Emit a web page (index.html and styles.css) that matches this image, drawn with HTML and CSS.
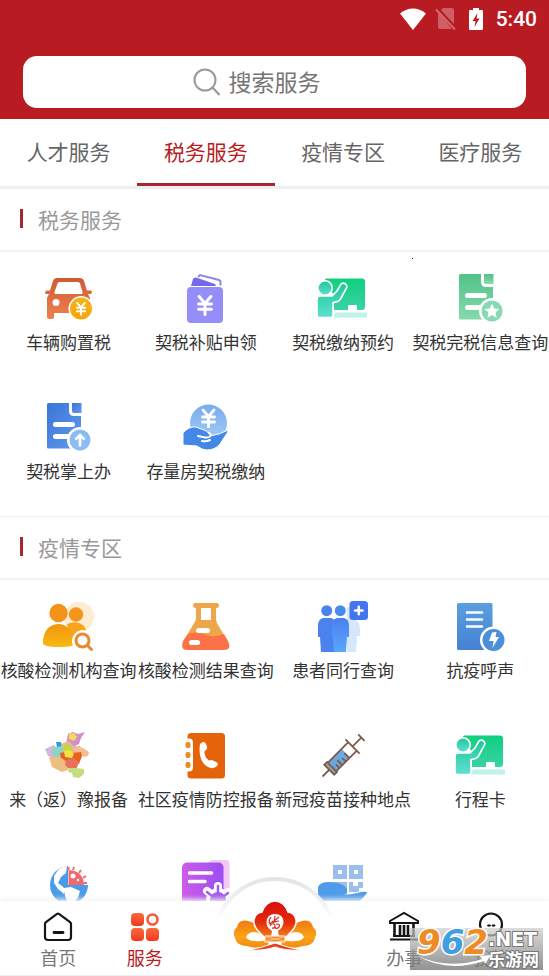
FILE: index.html
```html
<!DOCTYPE html>
<html lang="zh-CN">
<head>
<meta charset="utf-8">
<meta name="viewport" content="width=device-width, initial-scale=1">
<title>服务</title>
<link rel="stylesheet" href="styles.css">
</head>
<body>
<svg class="defs" aria-hidden="true">
  <defs>
    <linearGradient id="g-car" x1="0" y1="0" x2="0" y2="1"><stop offset="0" stop-color="#cf5a33"/><stop offset="1" stop-color="#ee8150"/></linearGradient>
    <linearGradient id="g-coin" x1="0" y1="0" x2="0" y2="1"><stop offset="0" stop-color="#f4b51c"/><stop offset="1" stop-color="#f6a50a"/></linearGradient>
    <linearGradient id="g-board" x1="0" y1="0" x2="0" y2="1"><stop offset="0" stop-color="#0fd07e"/><stop offset="1" stop-color="#3ad2a6"/></linearGradient>
    <linearGradient id="g-man" x1="0" y1="0" x2="0" y2="1"><stop offset="0" stop-color="#1fc796"/><stop offset="1" stop-color="#5ee0d2"/></linearGradient>
    <linearGradient id="g-gdoc" x1="0" y1="0" x2="0" y2="1"><stop offset="0" stop-color="#51c287"/><stop offset="1" stop-color="#86d9ae"/></linearGradient>
    <linearGradient id="g-bdoc" x1="0" y1="0" x2="1" y2="1"><stop offset="0" stop-color="#3c75d8"/><stop offset="1" stop-color="#5f9bec"/></linearGradient>
    <linearGradient id="g-ball" x1="0" y1="0" x2="0" y2="1"><stop offset="0" stop-color="#76acef"/><stop offset="1" stop-color="#a6cbf7"/></linearGradient>
    <linearGradient id="g-people" x1="0" y1="0" x2="0" y2="1"><stop offset="0" stop-color="#f3940f"/><stop offset="1" stop-color="#f8b912"/></linearGradient>
    <linearGradient id="g-trio" x1="0" y1="0" x2="0" y2="1"><stop offset="0" stop-color="#4a80ee"/><stop offset="1" stop-color="#5aa6fb"/></linearGradient>
    <linearGradient id="g-note" x1="0" y1="0" x2="0" y2="1"><stop offset="0" stop-color="#599fe0"/><stop offset="1" stop-color="#4781d2"/></linearGradient>
    <linearGradient id="g-purple" x1="0" y1="0" x2="1" y2="0"><stop offset="0" stop-color="#cb5ce8"/><stop offset="1" stop-color="#9c4df2"/></linearGradient>
    <linearGradient id="g-svc" x1="0" y1="0" x2="0" y2="1"><stop offset="0" stop-color="#fa6a3c"/><stop offset="1" stop-color="#f03a20"/></linearGradient>
    <linearGradient id="g-petal" x1="0" y1="0" x2="0" y2="1"><stop offset="0" stop-color="#d90d0d"/><stop offset=".55" stop-color="#e32a0c"/><stop offset="1" stop-color="#f58a1c"/></linearGradient>
    <linearGradient id="g-leaf" x1="0" y1="0" x2="0" y2="1"><stop offset="0" stop-color="#f07a10"/><stop offset=".6" stop-color="#fba315"/><stop offset="1" stop-color="#f28b12"/></linearGradient>
    <linearGradient id="g-arc" x1="0" y1="0" x2="0" y2="1"><stop offset="0" stop-color="#e1e5e5"/><stop offset=".35" stop-color="#fff"/></linearGradient>
    <symbol id="yen" viewBox="0 0 16 20"><path d="M2.5 2 8 8.500 13.500 2M2 9h12M2 14h12M8 9v10" fill="none" stroke="#fff" stroke-width="2.800" stroke-linecap="round"/></symbol>
    <symbol id="teacher" viewBox="0 0 52 52">
      <path d="M9 5.500h36a3 3 0 0 1 3 3V34a3 3 0 0 1-3 3H17V22L7 8z" fill="url(#g-board)"/>
      <path d="M31 37v-4q0-1 1-1h7q1 0 1 1v4z" fill="#fff"/>
      <path d="M18 39.500h32v5H16z" fill="#bdf3ea"/>
      <path d="M3 23h12l5-5 4-7a3.500 3.500 0 0 1 5.500 4l-6 11q-2 3-7.500 3.500V42q0 2.500-2 2.500H3q-3 0-3-3V27q0-4 3-4z" fill="url(#g-man)" stroke="#fff" stroke-width="1.600"/>
      <circle cx="8" cy="15" r="7.200" fill="url(#g-man)" stroke="#fff" stroke-width="1.600"/>
    </symbol>
    <symbol id="doc" viewBox="0 0 52 52">
      <path d="M5.500 1H26v8q0 5 5 5h7v31q0 1.500-1.500 1.500h-31Q4 46.500 4 45V2.500Q4 1 5.500 1z"/>
      <path d="M29 1h9.500v10H31q-2 0-2-2z"/>
      <path d="M12.500 22.500h17M12.500 34.500h14" stroke="#fff" stroke-width="5" stroke-linecap="round"/>
      <circle cx="37" cy="38" r="13" fill="#fff"/>
    </symbol>
  </defs>
</svg>

<div class="app">
  <header class="header">
    <div class="status">
      <svg class="wifi" viewBox="0 0 28 24" aria-hidden="true"><path d="M1 6.500Q14-3.500 27 6.500L14 23z" fill="#fff"/></svg>
      <svg class="sim" viewBox="0 0 22 24" aria-hidden="true"><path d="M6 3 19 17V3q0-2-2-2H8zM3 5v15q0 2 2 2h12z" fill="#cf5f64"/><path d="m1 2.500 19 20" stroke="#d3696d" stroke-width="2"/></svg>
      <svg class="battery" viewBox="0 0 16 24" aria-hidden="true"><path d="M5 1h6v2h3q1 0 1 1v18q0 1-1 1H2q-1 0-1-1V4q0-1 1-1h3z" fill="#fff"/><path d="M9.500 6 4.500 14h3L6.500 20l5-8.500h-3z" fill="#b81c22"/></svg>
      <time class="clock">5:40</time>
    </div>
    <form class="search" role="search">
      <label class="search-icon" for="q" aria-label="搜索服务">
        <svg viewBox="0 0 28 28" aria-hidden="true"><circle cx="12" cy="12" r="10.500" fill="none" stroke="#999" stroke-width="2"/><path d="m19.500 19.500 7 7.500" stroke="#999" stroke-width="2.200"/></svg>
      </label>
      <input class="search-input" id="q" type="search" placeholder="搜索服务">
    </form>
  </header>

  <nav class="tabs" aria-label="服务分类">
    <a class="tab" href="#talent">人才服务</a>
    <a class="tab tab-active" href="#tax" aria-current="true">税务服务</a>
    <a class="tab" href="#epidemic">疫情专区</a>
    <a class="tab" href="#medical">医疗服务</a>
  </nav>

  <main class="content">
    <span class="speck"></span>
    <section class="section" id="tax">
      <h2 class="section-title">税务服务</h2>
      <div class="grid">
        <a class="service" href="#"><svg class="icon" viewBox="0 0 50 50" aria-hidden="true">
          <path fill-rule="evenodd" d="M13 5h23q3 0 4 3l3 9.500h3.500q1.500 0 1.500 1.500t-1.500 2H44l2 4v13q0 2-2 2H10v4q0 2-2 2H5q-2 0-2-2V25l2-4H3q-2 0-2-1.500t2-2h3L9 8q1-3 4-3zm2.500 4q-1.500 0-2 1.500L10.500 19q-.5 2 1 2h26q1.500 0 1-2L36 10.500Q35.500 9 34 9z" fill="url(#g-car)"/>
          <circle cx="12" cy="29.500" r="3.500" fill="#fff"/><circle cx="37" cy="35.500" r="12.500" fill="#fff"/><circle cx="37" cy="35.500" r="11" fill="url(#g-coin)"/><use href="#yen" x="31.500" y="28" width="11" height="15"/></svg>车辆购置税</a>
        <a class="service" href="#"><svg class="icon" viewBox="0 0 50 50" aria-hidden="true">
          <path d="M10 13 12 6q1-2 3-1.500L34 11l1 2z" fill="#7469e8"/><path d="m17 4 2-2 19 5q1.500.5 1.500 2v3.500" fill="none" stroke="#8d83f2" stroke-width="2"/>
          <rect x="6" y="14" width="36" height="36" rx="4" fill="#958df8"/><use href="#yen" x="15.500" y="21" width="17" height="22"/></svg>契税补贴申领</a>
        <a class="service" href="#"><svg class="icon" viewBox="0 0 50 50" aria-hidden="true"><use href="#teacher" x="-1" width="52" height="52"/></svg>契税缴纳预约</a>
        <a class="service" href="#"><svg class="icon" viewBox="0 0 50 50" aria-hidden="true"><use href="#doc" width="52" height="52" fill="url(#g-gdoc)"/><circle cx="37" cy="38" r="10.500" fill="#86d9b2"/><path d="m37 30.500 2.200 5 5.300.5-4 3.500 1.200 5.500-4.700-3-4.700 3 1.200-5.500-4-3.500 5.300-.5z" fill="#fff"/></svg>契税完税信息查询</a>
        <a class="service" href="#"><svg class="icon" viewBox="0 0 50 50" aria-hidden="true"><use href="#doc" x="-1" width="52" height="52" fill="url(#g-bdoc)"/><circle cx="36" cy="38" r="10.500" fill="#8bbcf3"/><path d="M36 44.500V34m-4.500 3.500L36 33l4.500 4.500" fill="none" stroke="#fff" stroke-width="2.600"/></svg>契税掌上办</a>
        <a class="service" href="#"><svg class="icon" viewBox="0 0 50 50" aria-hidden="true"><circle cx="27.500" cy="21" r="18.500" fill="url(#g-ball)"/><use href="#yen" x="19" y="6" width="17" height="20"/>
          <path d="M2 31q6-7 13-6l8 3q3 1 5 3.500l3 2q8-1 15-5 2 0 .5 2L39 42q-5 6-13 6-5 0-10-4L2 43z" fill="#4388e6" stroke="#fff"/><path d="m17 34 7 1.500q4 .5 5.500-1.500.5-2-2-3.500M29 38q-4 2-8 1" fill="none" stroke="#fff" stroke-width="2" stroke-linecap="round"/></svg>存量房契税缴纳</a>
      </div>
    </section>

    <section class="section" id="epidemic">
      <h2 class="section-title">疫情专区</h2>
      <div class="grid">
        <a class="service" href="#"><svg class="icon" viewBox="0 0 50 50" aria-hidden="true"><circle cx="35" cy="16" r="15" fill="#fdebd2"/><circle cx="32" cy="13.500" r="7.200" fill="#f5961b"/><path d="M23 23q9-4 16 1 4 4 4 12H26z" fill="#f7a51b"/><circle cx="14.500" cy="12" r="9.200" fill="#f4921a"/>
          <path d="M-1 39Q1 24 14 23q14 0 17 19 0 4-16 4T-1 42z" fill="url(#g-people)"/><circle cx="39" cy="40" r="11" fill="#fff"/><circle cx="38.500" cy="39.500" r="6.500" fill="none" stroke="#e98a30" stroke-width="3"/><path d="m43.500 44.500 4 4" stroke="#e98a30" stroke-width="3" stroke-linecap="round"/></svg>核酸检测机构查询</a>
        <a class="service" href="#"><svg class="icon" viewBox="0 0 50 50" aria-hidden="true"><path d="M14 2h22q2 0 2 2.500T35 7v11q0 2 2 6l9 15H3l9-15q3-4 3-7V7q-3 0-3-2.500T14 2z" fill="#eda649"/><path d="M7 33q8-3 17 .5T43 33l4 7q4 9-4 9H6q-7 0-4-9z" fill="#fa7348"/><path d="M20 7h10v12H20z" fill="#fff"/><path d="M17.500 29.500h9M10.500 41.500h6" stroke="#fff" stroke-width="5" stroke-linecap="round"/></svg>核酸检测结果查询</a>
        <a class="service" href="#"><svg class="icon" viewBox="0 0 50 50" aria-hidden="true"><path d="M29 6h6v12q7 2 7 10v7h-3l-1 16h-9z" fill="#d4e7fd"/><path d="M5 17h8q5 1 5 9v25H3L2 36H0V25q0-7 5-8z" fill="#4b82ed"/><path d="M19 17h7q5 1 5 8v11h-2l-1 15H16l-1-15h-1V25q0-7 5-8z" fill="url(#g-trio)"/><circle cx="8.700" cy="9.700" r="5.500" fill="#4b82ed"/><circle cx="22.300" cy="9.700" r="5.500" fill="#4b8af0"/><rect x="31.500" width="18.500" height="19" rx="3.500" fill="#4376ee"/><path d="M37 9.500h7.500M40.800 5.700v7.500" stroke="#fff" stroke-width="2.500" stroke-linecap="round"/></svg>患者同行查询</a>
        <a class="service" href="#"><svg class="icon" viewBox="0 0 50 50" aria-hidden="true"><rect x="2" y="2" width="35.500" height="47" rx="1.500" fill="url(#g-note)"/><path d="M12 11.500h15M12 18.500h15M12 25.500h15" stroke="#fff" stroke-width="2.500" stroke-linecap="round"/><circle cx="38.500" cy="39" r="13.500" fill="#fff"/><circle cx="38.500" cy="39" r="11" fill="#4b8ed9"/><path d="m37 31.500 4.500-.5-1 5h3.500l-6.500 11 1-7H34z" fill="#fff"/></svg>抗疫呼声</a>
        <a class="service" href="#"><svg class="icon" viewBox="0 0 50 50" aria-hidden="true">
          <path d="m24 4 5-2 5 2 7-2-4 6-2 6-6 3-7-3z" fill="#d58fc4"/><path d="m25 4 5-1 3 4-3 4-5-2z" fill="#f1dc5c"/><path d="m1 19 9-4 4 5-2 9-8-3z" fill="#d5b4e0"/><path d="m8 18 9-3 4 8-3 7-9-2z" fill="#8bd4c6"/><path d="m12 12 5 0 1 4-5 1z" fill="#2a9fd8"/><path d="m17 14 7-3 6 5 6 0 3 6-9 4-10-4z" fill="#e9b3a8"/><path d="m18 16 7-2 4 5-3 5-6-2z" fill="#c2d937"/><path d="m32 16 7 2 6 4-1 4-4 1-5-4-5 1z" fill="#f3bf8f"/><path d="m16 23 6-1 3 5 6 1v5l-7 1-7-5z" fill="#e8601c"/><path d="m28 23 9-1 1 4-3 8-7-3z" fill="#e8601c"/><path d="m20 21 6-1 4 4-2 4-7-1z" fill="#f2e24a"/><path d="m5 27 11 0 7 5 1 8-6 2-10-5z" fill="#efbd80"/><path d="m22 30 8-2 5 4-3 8-7-1-4-4z" fill="#e9705a"/><path d="m25 38 7 0 8 1 0 5-5 4-6-1-1-4-4-1z" fill="#c4dd80"/></svg>来（返）豫报备</a>
        <a class="service" href="#"><svg class="icon" viewBox="0 0 50 50" aria-hidden="true"><rect x="6.500" y="3" width="37.500" height="45.500" rx="3.500" fill="#e5640b"/><rect x="2" y="8.500" width="10" height="33" rx="4" fill="#fff"/><g fill="#e98a22"><rect x="4.500" y="12" width="5" height="6" rx="2"/><rect x="4.500" y="22" width="5" height="6" rx="2"/><rect x="4.500" y="32" width="5" height="6" rx="2"/></g><path d="M19 14q4-4 6 0 3 5-1.500 7-.5 6 4.500 9.500 2-1 4 0l4 2q2 2-1 4.500-6 3-11-2-7-7-5-21z" fill="#fff"/></svg>社区疫情防控报备</a>
        <a class="service" href="#"><svg class="icon" viewBox="0 0 50 50" aria-hidden="true"><g transform="rotate(45 25 26)" fill="none" stroke="#7d5a4c" stroke-width="1.800"><path d="M19.500 22h11v19h-11z" fill="#6aa9dc" stroke="none"/><path d="M19 12.500V42M31 12.500V42M15 12.500h20M25 12.500V0M20.500 0h9M25 46v9"/><path d="M18 41.500h14v4H18z" fill="#91a0a0"/><path d="M24 23h7M26 28h5M24 33h7M26 37h5"/></g></svg>新冠疫苗接种地点</a>
        <a class="service" href="#"><svg class="icon" viewBox="0 0 50 50" aria-hidden="true"><use href="#teacher" width="52" height="52"/></svg>行程卡</a>
        <a class="service" href="#" aria-label="全球疫情"><svg class="icon" viewBox="0 0 50 50" aria-hidden="true"><circle cx="25" cy="26" r="19" fill="#4a9be8"/><path d="M14 11q5-4 9-4l-1 7-5 4-3 6 4 3 3 3-1 5-6-5-4-6 0-7zM20 29l7-1 9 4-2 7-6 6-5-3-2-5z" fill="#fff"/><path d="M24 6h22v20H24z" fill="#fff"/><path d="M24.500 11q15 1 15.500 15H24.500z" fill="#ef696f"/><path d="m29 11 1-3M35 14l2-3M39 19l3-2M24.500 11V8M40 24h3" stroke="#ef696f" stroke-width="2"/><circle cx="29" cy="17" r="2.500" fill="#fff"/><circle cx="34" cy="21" r="1.200" fill="#fff"/></svg></a>
        <a class="service" href="#" aria-label="疫情通报"><svg class="icon" viewBox="0 0 50 50" aria-hidden="true"><rect x="28" y="1" width="20.500" height="32" rx="4" fill="#f3c8f4"/><rect x="1" y="3.500" width="41.500" height="47" rx="5" fill="url(#g-purple)"/><path d="M8.500 14h22M8.500 22.500h15.500" stroke="#fff" stroke-width="3.500" stroke-linecap="round"/><g fill="none" stroke="#fff" stroke-width="8" stroke-linecap="round"><path d="M37 32v-5M30 35l-4-3M44 35l3-2"/></g><circle cx="37" cy="41" r="12" fill="#fff"/><circle cx="37" cy="41" r="8" fill="#a75bea"/><path d="M37 34v-7M31 37l-5-4M43 37l4-3" stroke="#a75bea" stroke-width="2.500" stroke-linecap="round"/></svg></a>
        <a class="service" href="#" aria-label="健康码"><svg class="icon" viewBox="0 0 50 50" aria-hidden="true"><path fill-rule="evenodd" d="M15 6h14v14H15zm5 5v4h4v-4zM31 6h14v14H31zm5 5v4h4v-4zM15 23h14v14H15zM31 23h4v4h5v-4h5v6h-4v4H31z" fill="#9abfec"/><path d="M0 28q2-5 11-5 8 0 14 3 5 3 4 7-1 2-4 3 12-1 18-3 7-1 6 1-6 8-12 11H7Q0 42 0 38z" fill="#509ceb"/></svg></a>
      </div>
    </section>
  </main>

  <nav class="bottom" aria-label="主导航">
    <a class="nav-item" href="#"><svg class="nav-icon" viewBox="0 0 32 32" aria-hidden="true"><path d="M15 4q1-.8 2 0l11 8q1 1 1 2v13q0 3-3 3H6q-3 0-3-3V14q0-1 1-2z" fill="none" stroke="#161616" stroke-width="2.200"/><path d="M12 22.500h9" stroke="#161616" stroke-width="2.800" stroke-linecap="round"/></svg>首页</a>
    <a class="nav-item nav-active" href="#" aria-current="page"><svg class="nav-icon" viewBox="0 0 32 32" aria-hidden="true"><g fill="url(#g-svc)"><rect x="2" y="3" width="13" height="13" rx="4"/><rect x="2" y="18" width="13" height="13" rx="4"/><rect x="17" y="18" width="13" height="13" rx="4"/></g><circle cx="23.500" cy="9.500" r="5" fill="none" stroke="#f2583a" stroke-width="2.600"/></svg>服务</a>
    <a class="nav-home" href="#" aria-label="豫事办">
      <svg class="dome" viewBox="0 0 124 124" aria-hidden="true"><circle cx="62" cy="62" r="60" fill="#fff" stroke="url(#g-arc)" stroke-width="4"/></svg>
      <svg class="lotus" viewBox="0 0 84 50" aria-hidden="true">
        <path d="M2 37q-3-7 2-11 2-8 11-6 9 2 15 11l5 9q2 5-4 6-9 2-17-1-10 0-12-8zM82 37q3-7-2-11-2-8-11-6-9 2-15 11l-5 9q-2 5 4 6 9 2 17-1 10 0 12-8z" fill="url(#g-leaf)"/>
        <path d="M13 36q2-5 9-5 7 1 11 8-5 2-11 1-7 0-9-4zM71 36q-2-5-9-5-7 1-11 8 5 2 11 1 7 0 9-4z" fill="#fff"/>
        <path d="M28 33q-8-7-7-14 1-7 8-8Q33 0 42 0t13 11q7 1 8 8 1 7-7 14l-5 5H33z" fill="url(#g-petal)" stroke="#fff" stroke-width="1.500"/>
        <path d="M42 13q8 0 8.500 8 0 5-5.500 9l1 6h-8l1-6q-6-4-5.500-9 .5-8 8.500-8z" fill="#fff"/>
        <path d="M38 16q-3 4-1 7l3-3M42 15l-1 7M46 16l-6 5 6-1M37 25q3-4 5-1 0 4-3 3M43 23q5 0 3 3-3 3-4 0" fill="none" stroke="#d92a1b" stroke-width="1.200"/>
        <path d="M32 35h20v6H32z" fill="#ef8a2d" stroke="#fff"/><path d="m33 36 18 4M33 40l18-4" stroke="#fbc27b"/>
        <path d="M16 49q12-2 26-7 14 5 26 7-15 1-26-3-11 4-26 3z" fill="#e5431d" stroke="#fff"/>
      </svg>
    </a>
    <a class="nav-item" href="#"><svg class="nav-icon" viewBox="0 0 32 32" aria-hidden="true"><path d="M2 11 16 3l14 8v2H2zM2 29.500h28M5 26h22" fill="none" stroke="#161616" stroke-width="2"/><path d="M6.500 13v13M12 15v11M16 15v11M20 15v11M25.500 13v13" stroke="#161616" stroke-width="2.600"/></svg>办事</a>
    <a class="nav-item" href="#"><svg class="nav-icon" viewBox="0 0 32 32" aria-hidden="true"><circle cx="16" cy="14.500" r="11" fill="none" stroke="#161616" stroke-width="2.200"/><path d="M12.500 15q1.500 1.500 3 0M17 15q1.500 1.500 3 0" fill="none" stroke="#161616" stroke-width="1.800"/></svg>我的</a>
  </nav>

  <div class="mark">
    <div class="mark-num"><span>9</span><span class="mark-blue">6</span><span>2</span></div>
    <div class="mark-side"><span class="mark-net">.NET</span><span class="mark-cn">乐游网</span></div>
    <svg class="mark-swoosh" viewBox="0 0 76 17" aria-hidden="true"><path d="M1 3q30 14 64 3l-2-3 11-1-6 9-1-3Q30 20 1 3z" fill="#fff"/></svg>
  </div>
</div>
</body>
</html>
```
FILE: styles.css
```css
* {
  box-sizing: border-box;
}

body {
  margin: 0;
  background: #fff;
  color: #333;
  font-family: Roboto, "Noto Sans CJK SC", sans-serif;
}

a {
  color: inherit;
  text-decoration: none;
}

svg {
  display: block;
  overflow: visible;
}

.defs {
  position: absolute;
  width: 0;
  height: 0;
}

.app {
  position: relative;
  display: flex;
  flex-direction: column;
  height: 100vh;
  overflow: hidden;
}

.header {
  flex: none;
  padding-bottom: 11px;
  background: #b81c22;
}

.status {
  display: flex;
  align-items: center;
  justify-content: flex-end;
  height: 37px;
  padding-right: 12px;
}

.wifi {
  width: 28px;
  height: 24px;
  margin-right: 8px;
}

.sim {
  width: 22px;
  height: 24px;
  margin-right: 11px;
}

.battery {
  width: 16px;
  height: 24px;
  margin-right: 12px;
}

.clock {
  color: #fff;
  font-size: 21px;
  font-weight: 500;
  line-height: 24px;
}

.search {
  display: flex;
  align-items: center;
  justify-content: center;
  gap: 8px;
  height: 52px;
  margin: 19px 23px 0;
  border-radius: 14px;
  background: #fff;
}

.search-icon svg {
  width: 28px;
  height: 28px;
}

.search-input {
  width: 128px;
  height: 42px;
  padding: 2px 0 0;
  border: 0;
  outline: 0;
  background: none;
  color: #333;
  font: inherit;
  font-size: 23px;
}

.search-input::placeholder {
  color: #757575;
}

.tabs {
  display: grid;
  flex: none;
  grid-template-columns: repeat(4, 1fr);
  border-bottom: 3px solid #eee;
}

.tab {
  padding-top: 4px;
  border-bottom: 3px solid transparent;
  color: #666;
  font-size: 21px;
  line-height: 60px;
  text-align: center;
}

.tab-active {
  border-color: #a6272f;
  color: #b81c22;
}

.content {
  position: relative;
  flex: 1;
  min-height: 0;
  overflow: hidden;
}

.speck {
  position: absolute;
  top: 69px;
  left: 75%;
  width: 1px;
  height: 1px;
  background: #222;
}

.section + .section {
  border-top: 1px solid #eee;
}

.section-title {
  display: flex;
  align-items: center;
  gap: 15px;
  height: 63px;
  margin: 0;
  padding: 0 0 2px 20px;
  border-bottom: 2px solid #f2f2f2;
  color: #999;
  font-size: 21px;
  font-weight: 400;
}

.section-title::before {
  width: 3px;
  height: 19px;
  background: #a6272f;
  content: "";
}

.grid {
  display: grid;
  grid-template-columns: repeat(4, 1fr);
  padding-bottom: 6px;
}

.service {
  display: flex;
  flex-direction: column;
  align-items: center;
  gap: 8px;
  height: 129px;
  padding-top: 21px;
  font-size: 17px;
  line-height: 24px;
  white-space: nowrap;
}

.icon {
  width: 50px;
  height: 50px;
}

.bottom {
  position: relative;
  display: grid;
  flex: none;
  grid-template-columns: 1fr 1fr 2fr 1fr 1fr;
  height: 75px;
  padding: 0 15px;
  border-bottom: 1px solid #eee;
  background: #fff;
  box-shadow: 0 -2px 5px #f4f4f4;
}

.nav-item {
  display: flex;
  flex-direction: column;
  align-items: center;
  gap: 4px;
  padding-top: 9px;
  color: #777;
  font-size: 18px;
  line-height: 26px;
}

.nav-active {
  color: #b81c22;
}

.nav-icon {
  width: 32px;
  height: 32px;
}

.nav-home {
  position: relative;
  display: flex;
  align-items: flex-start;
  justify-content: center;
}

.dome {
  position: absolute;
  top: -24px;
  left: calc(50% - 62px);
  width: 124px;
  height: 124px;
  clip-path: inset(0 0 26px 0);
}

.lotus {
  position: relative;
  width: 84px;
  height: 50px;
}

.mark {
  position: absolute;
  right: 6px;
  bottom: 6px;
  display: flex;
  width: 133px;
  height: 42px;
  padding-left: 7px;
  background: linear-gradient(rgba(205, 205, 205, 0.7), rgba(110, 110, 110, 0.75));
  font-family: "DejaVu Sans", "Noto Sans CJK SC", sans-serif;
  font-weight: 700;
}

.mark-num {
  color: #f08a24;
  font-size: 34px;
  font-style: italic;
  line-height: 28px;
  -webkit-text-stroke: 3px #fff;
  paint-order: stroke fill;
}

.mark-blue {
  color: #3f9fe0;
}

.mark-side {
  display: flex;
  flex-direction: column;
  color: #fff;
  -webkit-text-stroke: 2px #777;
  paint-order: stroke fill;
}

.mark-net {
  font-size: 19px;
  line-height: 23px;
}

.mark-cn {
  font-size: 17px;
  line-height: 18px;
}

.mark-swoosh {
  position: absolute;
  bottom: 0;
  left: 7px;
  width: 76px;
  height: 17px;
}
```
